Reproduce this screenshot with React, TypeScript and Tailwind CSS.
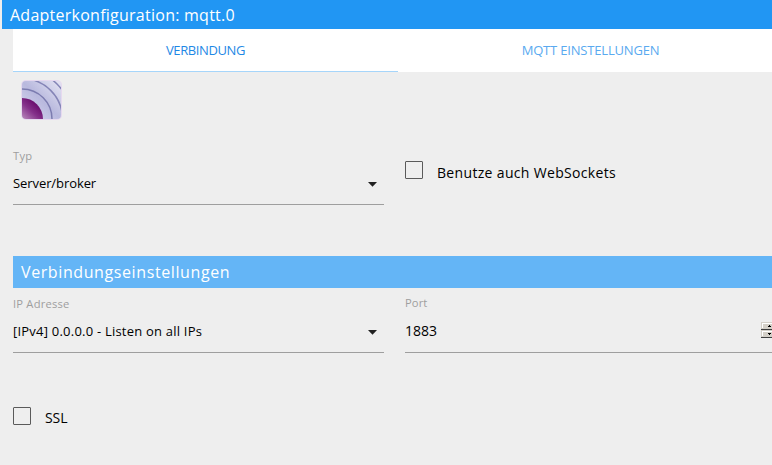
import React, { useState } from "react";

type SelectFieldProps = {
  label: string;
  value: string;
  valueClass: string;
  labelClass: string;
};

const TABS = [
  {
    id: "connection",
    title: "VERBINDUNG",
    className: "text-[#1e88e5] tracking-[-0.4px]",
  },
  {
    id: "mqtt",
    title: "MQTT EINSTELLUNGEN",
    className: "text-[#5aaaf0] tracking-[-0.18px]",
  },
];

function AdapterLogo() {
  return (
    <svg className="ml-2 block h-10 w-[41px]" viewBox="0 0 41 40">
      <defs>
        <clipPath id="logo-clip">
          <rect x="1" y="1" width="39" height="38" rx="4" />
        </clipPath>
        <linearGradient id="logo-bg" x1="0" y1="1" x2="1" y2="0">
          <stop offset="0" stopColor="#dcdcf2" />
          <stop offset="0.5" stopColor="#b9b9de" />
          <stop offset="1" stopColor="#e6e6f4" />
        </linearGradient>
        <linearGradient id="logo-core" gradientUnits="userSpaceOnUse" x1="1" y1="39" x2="15" y2="24">
          <stop offset="0" stopColor="#b98abd" />
          <stop offset="0.6" stopColor="#84308a" />
          <stop offset="1" stopColor="#6b0f6e" />
        </linearGradient>
      </defs>
      <rect width="41" height="40" rx="5" fill="#e6d9ef" />
      <g clipPath="url(#logo-clip)">
        <rect width="41" height="40" fill="url(#logo-bg)" />
        <circle cx="1" cy="39" r="49.5" fill="none" stroke="#8484b6" strokeWidth="1.5" />
        <circle cx="1" cy="39" r="40.5" fill="none" stroke="#8484b6" strokeWidth="1.5" />
        <circle cx="1" cy="39" r="30" fill="none" stroke="#7c7cb0" strokeWidth="1.5" />
        <circle cx="1" cy="39" r="21" fill="url(#logo-core)" />
      </g>
    </svg>
  );
}

function SelectField({ label, value, valueClass, labelClass }: SelectFieldProps) {
  return (
    <div className="w-[371px]">
      <div className={`h-4 text-[11.2px] leading-4 font-medium text-[#9e9e9e] ${labelClass}`}>
        {label}
      </div>
      <div className="flex h-[41px] items-center justify-between border-b border-[#9e9e9e] pr-[7px]">
        <span className={`pb-0.5 text-[13px] leading-5 ${valueClass}`}>{value}</span>
        <svg className="h-[5px] w-[9px]" viewBox="0 0 9 5">
          <path d="M0 0h9L4.5 4.8z" fill="#212121" />
        </svg>
      </div>
    </div>
  );
}

function Checkbox({ label, className }: { label: string; className: string }) {
  const [checked, setChecked] = useState(false);

  return (
    <label className="flex items-start">
      <input
        type="checkbox"
        checked={checked}
        onChange={(e) => setChecked(e.target.checked)}
        className="h-[18px] w-[18px] appearance-none rounded-[1px] border border-[#5a5a5a] checked:bg-[#26a69a]"
      />
      <span className={`ml-[14px] text-sm leading-5 ${className}`}>{label}</span>
    </label>
  );
}

function StepButton({ up }: { up?: boolean }) {
  return (
    <svg className="block h-2 w-[17px]" viewBox="0 0 17 8" shapeRendering="crispEdges">
      <rect width="17" height="8" fill="#d4d0c8" />
      <path d="M1 1h15v1H2v4H1z" fill="#fff" />
      <path d="M0 7h17v1H0z" fill="#404040" />
      <path d={up ? "M8 3h1v1h1v1H7V4h1z" : "M7 3h3v1H9v1H8V4H7z"} fill="#000" />
    </svg>
  );
}

export default function App() {
  const [tab, setTab] = useState("connection");

  return (
    <div className="h-[465px] w-full overflow-hidden bg-[#eeeeee] pl-0.5 font-['Open_Sans','Noto_Sans',sans-serif] text-black">
      <header className="h-[29px] bg-[#2196f3] pl-2 text-base leading-[30px] whitespace-nowrap text-white">
        <span className="tracking-[0.25px]">Adapterkonfiguration: mqtt.0</span>
      </header>

      <main className="ml-[11px] w-[770px]">
        <nav className="flex h-[43px] bg-white">
          {TABS.map((t) => (
            <button
              key={t.id}
              onClick={() => setTab(t.id)}
              className={`w-[385px] border-b pt-0.5 text-[13px] ${t.className} ${
                tab === t.id ? "border-[#a6d5fa]" : "border-transparent"
              }`}
            >
              {t.title}
            </button>
          ))}
        </nav>

        <div className="pt-2">
          <AdapterLogo />
        </div>

        <div className="mt-7 flex">
          <div className="w-[392px]">
            <SelectField
              label="Typ"
              value="Server/broker"
              labelClass="tracking-[0.3px]"
              valueClass="tracking-[-0.08px]"
            />
          </div>
          <div className="pt-[13px]">
            <Checkbox label="Benutze auch WebSockets" className="pt-0.5 tracking-[0.33px]" />
          </div>
        </div>

        <h2 className="mt-[51px] h-8 bg-[#64b5f6] pl-2 text-base leading-8 text-white">
          <span className="tracking-[0.6px]">Verbindungseinstellungen</span>
        </h2>

        <div className="mt-2 flex">
          <div className="w-[392px]">
            <SelectField
              label="IP Adresse"
              value="[IPv4] 0.0.0.0 - Listen on all IPs"
              labelClass="tracking-[0.2px]"
              valueClass="tracking-[0.22px]"
            />
          </div>
          <div className="w-[371px]">
            <div className="-mt-px h-[17px] text-[11.2px] leading-4 font-medium tracking-[0.1px] text-[#9e9e9e]">
              Port
            </div>
            <div className="flex h-[41px] items-center justify-between border-b border-[#9e9e9e] text-sm">
              <span className="pb-0.5">1883</span>
              <div className="-mr-[2px] w-[17px] pb-1">
                <StepButton up />
                <StepButton />
              </div>
            </div>
          </div>
        </div>

        <div className="mt-[54px]">
          <Checkbox label="SSL" className="pt-px tracking-[-0.1px]" />
        </div>
      </main>
    </div>
  );
}
